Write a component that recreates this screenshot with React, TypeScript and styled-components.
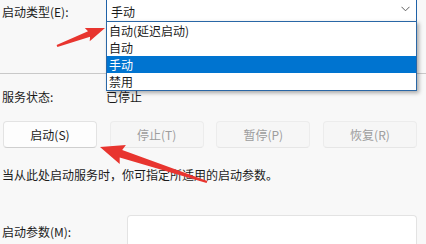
import React from 'react'
import styled, { createGlobalStyle } from 'styled-components'

const GlobalStyle = createGlobalStyle`
  html, body {
    margin: 0;
    padding: 0;
    background: #f8f8f8;
  }
  body {
    font-family: 'Noto Sans CJK SC', 'Noto Sans', sans-serif;
    font-size: 12px;
    color: #1b1b1b;
  }
`

const Page = styled.div`
  position: relative;
  width: 426px;
  height: 244px;
  overflow: hidden;
  background: #f8f8f8;
`

const Content = styled.div`
  display: flex;
  flex-direction: column;
  padding: 0 9px 0 2px;
  margin-top: -4px;
`

const Row = styled.div<{ $top?: number }>`
  display: flex;
  align-items: center;
  margin-top: ${props => props.$top || 0}px;
`

const Label = styled.div`
  width: 104px;
  flex-shrink: 0;
  line-height: 17px;
  white-space: nowrap;
`

const Value = styled.div`
  line-height: 17px;
`

const ComboWrap = styled.div`
  position: relative;
  flex: 1;
`

const Combo = styled.div`
  height: 24px;
  display: flex;
  align-items: center;
  justify-content: space-between;
  padding: 0 6px 0 4px;
  background: #ffffff;
  border: 1px solid #1f62a8;
`

const ComboText = styled.span`
  padding-top: 4px;
`

const ListBox = styled.ul`
  position: absolute;
  z-index: 2;
  left: 0;
  right: 0;
  top: 25px;
  margin: 0;
  padding: 0;
  list-style: none;
  background: #ffffff;
  border: 1px solid #2a67a6;
  box-shadow: 2px 2px 4px rgba(0, 0, 0, 0.32);
`

const ListItem = styled.li<{ $selected?: boolean }>`
  height: 17px;
  line-height: 17px;
  padding-left: 2px;
  background: ${props => (props.$selected ? '#0074d0' : 'transparent')};
  color: ${props => (props.$selected ? '#ffffff' : '#1b1b1b')};
`

const Separator = styled.div`
  height: 1px;
  margin: 51px -9px 0 -2px;
  background: #c9c9c9;
`

const ButtonRow = styled.div`
  display: grid;
  grid-template-columns: repeat(4, 94px);
  justify-content: space-between;
  margin: 16px 0 0 1px;
`

const Button = styled.button<{ $disabled?: boolean }>`
  height: 27px;
  padding: 0;
  font-family: inherit;
  font-size: 12px;
  border-radius: 4px;
  border: 1px solid ${props => (props.$disabled ? '#ececec' : '#e3e3e3')};
  border-bottom-color: ${props => (props.$disabled ? '#e6e6e6' : '#cfcfcf')};
  background: ${props => (props.$disabled ? '#f6f6f6' : '#fdfdfd')};
  color: ${props => (props.$disabled ? '#9d9d9d' : '#1b1b1b')};
`

const Description = styled.div`
  margin-top: 18px;
  line-height: 17px;
  white-space: nowrap;
`

const TypeLabel = styled(Label)`
  padding-top: 4px;
`

const ParamLabel = styled(Label)`
  width: 125px;
`

const Input = styled.div`
  flex: 1;
  height: 30px;
  background: #ffffff;
  border: 1px solid #e3e3e3;
  border-bottom-color: #8a8a8a;
  border-radius: 4px;
`

const Overlay = styled.svg`
  position: absolute;
  left: 0;
  top: 0;
  z-index: 3;
  pointer-events: none;
`

type Pt = [number, number]

const arrowPoints = (
  tail: Pt,
  tip: Pt,
  headLen: number,
  headHalf: number,
  shaftTail: number,
  shaftHead: number
) => {
  const dx = tip[0] - tail[0]
  const dy = tip[1] - tail[1]
  const len = Math.hypot(dx, dy)
  const ux = dx / len
  const uy = dy / len
  const nx = -uy
  const ny = ux
  const bx = tip[0] - ux * headLen
  const by = tip[1] - uy * headLen
  const pts: Pt[] = [
    [tail[0] + nx * shaftTail, tail[1] + ny * shaftTail],
    [bx + nx * shaftHead, by + ny * shaftHead],
    [bx + nx * headHalf - ux * 2, by + ny * headHalf - uy * 2],
    tip,
    [bx - nx * headHalf - ux * 2, by - ny * headHalf - uy * 2],
    [bx - nx * shaftHead, by - ny * shaftHead],
    [tail[0] - nx * shaftTail, tail[1] - ny * shaftTail]
  ]
  return pts.map(p => `${p[0].toFixed(1)},${p[1].toFixed(1)}`).join(' ')
}

const Chevron = () => (
  <svg width='9' height='6' viewBox='0 0 9 6'>
    <polyline
      points='0.5,0.8 4.5,4.8 8.5,0.8'
      fill='none'
      stroke='#5f5f5f'
      strokeWidth='1'
    />
  </svg>
)

const options = ['自动(延迟启动)', '自动', '手动', '禁用']

const App: React.FC = () => {
  return (
    <Page>
      <GlobalStyle />
      <Content>
        <Row>
          <TypeLabel>启动类型(E):</TypeLabel>
          <ComboWrap>
            <Combo>
              <ComboText>手动</ComboText>
              <Chevron />
            </Combo>
            <ListBox>
              {options.map(o => (
                <ListItem key={o} $selected={o === '手动'}>
                  {o}
                </ListItem>
              ))}
            </ListBox>
          </ComboWrap>
        </Row>
        <Separator />
        <Row $top={14}>
          <Label>服务状态:</Label>
          <Value>已停止</Value>
        </Row>
        <ButtonRow>
          <Button>启动(S)</Button>
          <Button $disabled>停止(T)</Button>
          <Button $disabled>暂停(P)</Button>
          <Button $disabled>恢复(R)</Button>
        </ButtonRow>
        <Description>当从此处启动服务时，你可指定所适用的启动参数。</Description>
        <Row $top={32}>
          <ParamLabel>启动参数(M):</ParamLabel>
          <Input />
        </Row>
      </Content>
      <Overlay width='426' height='244' viewBox='0 0 426 244'>
        <polygon
          points={arrowPoints([57, 46], [105, 28], 17, 7, 1, 3)}
          fill='#e8352f'
        />
        <polygon
          points={arrowPoints([207, 182], [100, 147], 22, 10, 1.2, 4)}
          fill='#e8352f'
        />
      </Overlay>
    </Page>
  )
}

export default App
